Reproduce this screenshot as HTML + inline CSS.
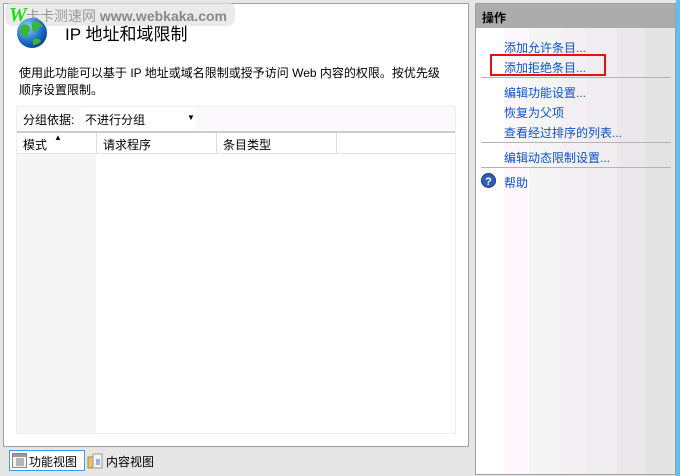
<!DOCTYPE html>
<html><head><meta charset="utf-8"><style>
*{margin:0;padding:0;box-sizing:border-box}
body{width:680px;height:476px;background:#e6e6e6;position:relative;overflow:hidden;font-family:"Liberation Sans","Noto Sans CJK SC",sans-serif;font-size:12px;color:#000}
.a{position:absolute}
.lp{left:3px;top:3px;width:466px;height:444px;background:#fff;border:1px solid #a0a0a0}
.rp{left:475px;top:3px;width:201px;height:472px;border:1px solid #a0a0a0;background:linear-gradient(to right,#fff 0,#fff 28px,#fff7fd 28px,#fff7fd 53px,#f5f5f5 53px,#f5f5f5 85px,#f3eff3 85px,#f3eff3 110px,#efedef 110px,#efedef 141px,#ebe7eb 141px,#ebe7eb 169px,#e4e4e4 169px)}
.lnk{color:#0b53c8;font-size:12px}
.sep{height:1px;background:#b4b4b4}
</style></head><body>
<div class="a lp"></div>
<div class="a" style="left:5px;top:2px;width:230px;height:24px;background:rgba(225,225,225,.7);border-radius:8px"></div>
<div class="a" style="left:9px;top:4px;font:bold 20px 'Liberation Serif',serif;color:#22dd11;font-style:italic">W</div>
<div class="a" style="left:26px;top:6px;font-size:14px;color:#999">卡卡测速网 <b style="color:#888">www.webkaka.com</b></div>
<svg class="a" style="left:16px;top:17px" width="32" height="32" viewBox="0 0 32 32"><defs><radialGradient id="g" cx=".35" cy=".3" r=".8"><stop offset="0" stop-color="#8fd4ff"/><stop offset=".6" stop-color="#1d6fc7"/><stop offset="1" stop-color="#0b3a80"/></radialGradient></defs><circle cx="16" cy="16" r="15" fill="url(#g)"/><path d="M6 8c4-2 7 0 8 3s-3 4-2 7-3 3-5 1-4-7-1-11zM18 4c4 0 8 3 9 6-2 1-4-1-6 1s1 4-2 4-3-4-3-6 0-5 2-5zM18 22c3-1 6 0 7 2-2 3-5 4-8 4 0-2-1-5 1-6z" fill="#3bb534"/></svg>
<div class="a" style="left:65px;top:20px;font-size:17px">IP 地址和域限制</div>
<div class="a" style="left:19px;top:65px;line-height:17px;font-size:12px">使用此功能可以基于 IP 地址或域名限制或授予访问 Web 内容的权限。按优先级<br>顺序设置限制。</div>
<div class="a" style="left:16px;top:106px;width:440px;height:328px;border:1px solid #eee;background:#fff"></div>
<div class="a" style="left:17px;top:107px;width:438px;height:24px;background:#fbf9fb"></div>
<div class="a" style="left:23px;top:111px">分组依据:</div>
<div class="a" style="left:81px;top:107px;width:115px;height:24px;background:#fff"></div>
<div class="a" style="left:85px;top:111px">不进行分组</div>
<div class="a" style="left:187px;top:113px;font-size:8px">▼</div>
<div class="a" style="left:17px;top:131px;width:438px;height:2px;background:#ccc"></div>
<div class="a" style="left:17px;top:133px;width:438px;height:21px;border-bottom:1px solid #e0e0e0"></div>
<div class="a" style="left:96px;top:133px;width:1px;height:20px;background:#ddd"></div>
<div class="a" style="left:216px;top:133px;width:1px;height:20px;background:#ddd"></div>
<div class="a" style="left:336px;top:133px;width:1px;height:20px;background:#ddd"></div>
<div class="a" style="left:23px;top:136px">模式</div>
<div class="a" style="left:54px;top:133px;font-size:8px">▲</div>
<div class="a" style="left:103px;top:136px">请求程序</div>
<div class="a" style="left:223px;top:136px">条目类型</div>
<div class="a" style="left:17px;top:155px;width:79px;height:278px;background:#f5f5f5"></div>
<div class="a" style="left:9px;top:450px;width:76px;height:21px;border:1px solid #3a9cf0;background:#fff"></div>
<svg class="a" style="left:12px;top:453px" width="15" height="15"><rect x=".5" y=".5" width="14" height="14" fill="#f4f4f4" stroke="#888"/><rect x="1" y="1" width="13" height="3" fill="#999"/><path d="M4 6h8M4 8h8M4 10h8M4 12h8" stroke="#777"/></svg>
<div class="a" style="left:29px;top:453px">功能视图</div>
<svg class="a" style="left:87px;top:452px" width="16" height="17"><path d="M1 5h9v11H1z" fill="#e8c26a" stroke="#b08a30"/><path d="M6 2h9v14H6z" fill="#f4f4f4" stroke="#999"/><path d="M9 8h4M9 10h4M9 12h4" stroke="#3a7ad0"/></svg>
<div class="a" style="left:106px;top:453px">内容视图</div>
<div class="a rp"></div>
<div class="a" style="left:476px;top:4px;width:199px;height:24px;background:#acacac"></div>
<div class="a" style="left:482px;top:9px;font-weight:bold;font-size:12px">操作</div>
<div class="a lnk" style="left:504px;top:39px">添加允许条目...</div>
<div class="a lnk" style="left:504px;top:59px">添加拒绝条目...</div>
<div class="a" style="left:490px;top:54px;width:116px;height:22px;border:2px solid #e81010"></div>
<div class="a sep" style="left:481px;top:77px;width:190px"></div>
<div class="a lnk" style="left:504px;top:84px">编辑功能设置...</div>
<div class="a lnk" style="left:504px;top:104px">恢复为父项</div>
<div class="a lnk" style="left:504px;top:124px">查看经过排序的列表...</div>
<div class="a sep" style="left:481px;top:142px;width:190px"></div>
<div class="a lnk" style="left:504px;top:149px">编辑动态限制设置...</div>
<div class="a sep" style="left:481px;top:167px;width:190px"></div>
<svg class="a" style="left:481px;top:173px" width="15" height="15"><circle cx="7.5" cy="7.5" r="7" fill="#2f5fb8" stroke="#1a3a80"/><text x="7.5" y="12" font-size="11" font-weight="bold" fill="#fff" text-anchor="middle" font-family="Liberation Sans">?</text></svg>
<div class="a lnk" style="left:504px;top:174px">帮助</div>
<div class="a" style="left:676px;top:0;width:4px;height:476px;background:#55c4ee"></div>
</body></html>
